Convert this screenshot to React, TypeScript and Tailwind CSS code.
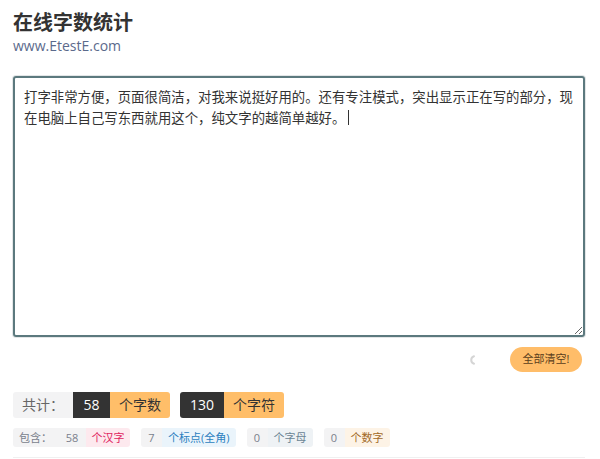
import { useState } from "react";

const text =
  "打字非常方便，页面很简洁，对我来说挺好用的。还有专注模式，突出显示正在写的部分，现在电脑上自己写东西就用这个，纯文字的越简单越好。";

const subStats = [
  { n: 58, label: "个汉字", bg: "bg-[#fde9ee]", fg: "text-[#e0245e]" },
  { n: 7, label: "个标点(全角)", bg: "bg-[#eaf4fb]", fg: "text-[#2a7fbf]" },
  { n: 0, label: "个字母", bg: "bg-[#eef2f5]", fg: "text-[#6a8494]" },
  { n: 0, label: "个数字", bg: "bg-[#fdf3e6]", fg: "text-[#a36a28]" },
];

export default function App() {
  const [value] = useState(text);

  return (
    <div
      className="min-h-[459px] bg-white pl-[13px] pr-[15px] pt-[9px] text-[#333]"
      style={{ fontFamily: '"Open Sans", "Noto Sans CJK SC", sans-serif' }}
    >
      <h1 className="text-[20px] font-bold leading-[28px] text-[#333]">在线字数统计</h1>
      <div className="text-[14px] leading-[18px] text-[#5b6a8c]">www.EtestE.com</div>

      <div className="mt-[21px] h-[261px] resize overflow-auto rounded-[3px] border-2 border-[#5c797e] px-[9px] py-[9px] text-[13.4px] leading-[21px] text-[#333] shadow-[0_0_0_1px_#e3e6e7]">
        {value}
        <span className="ml-[3px] inline-block h-[15px] w-px translate-y-[2px] bg-[#333]" />
      </div>

      <div className="mt-[10px] flex items-center justify-end gap-[34px] pr-[3px]">
        <svg width="8" height="10" viewBox="0 0 8 10" className="text-[#d5d5d5]">
          <path d="M6 1.2A4 4 0 0 0 6 8.8" fill="none" stroke="currentColor" strokeWidth="2" strokeLinecap="round" />
        </svg>
        <button className="h-[25px] w-[72px] rounded-full bg-[#ffbd69] text-[11px] text-[#5a3d1c]">
          全部清空!
        </button>
      </div>

      <div className="mt-[20px] flex items-center gap-[10px] text-[14px] leading-[26px]">
        <div className="flex overflow-hidden rounded-[3px]">
          <span className="w-[60px] bg-[#f3f3f4] text-center text-[#666]">共计：</span>
          <span className="w-[37px] bg-[#333] text-center text-white">58</span>
          <span className="w-[60px] bg-[#ffbe69] text-center text-[#333]">个字数</span>
        </div>
        <div className="flex overflow-hidden rounded-[3px]">
          <span className="w-[44px] bg-[#333] text-center text-white">130</span>
          <span className="w-[60px] bg-[#ffbe69] text-center text-[#333]">个字符</span>
        </div>
      </div>

      <div className="mt-[10px] flex items-center gap-[11px] border-b border-[#f0f0f0] pb-[10px] text-[11px] leading-[19px]">
        <div className="flex overflow-hidden rounded-[3px]">
          <span className="w-[45px] bg-[#f3f3f4] text-center text-[#7a7f8c]">包含：</span>
          <span className="w-[28px] bg-[#f3f3f4] text-center text-[#7a7f8c]">{subStats[0].n}</span>
          <span className={`w-[44px] text-center ${subStats[0].bg} ${subStats[0].fg}`}>{subStats[0].label}</span>
        </div>
        {subStats.slice(1).map((s, i) => (
          <div key={i} className="flex overflow-hidden rounded-[3px]">
            <span className="w-[21px] bg-[#f3f3f4] text-center text-[#7a7f8c]">{s.n}</span>
            <span className={`px-[6px] text-center ${s.bg} ${s.fg}`}>{s.label}</span>
          </div>
        ))}
      </div>
    </div>
  );
}
